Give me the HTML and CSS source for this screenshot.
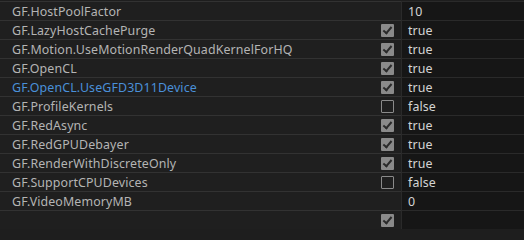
FILE: index.html
```html
<!DOCTYPE html>
<html>
<head>
<meta charset="utf-8">
<link rel="stylesheet" href="styles.css">
</head>
<body>
<div class="list">
  <div class="row"><span class="name">GF.HostPoolFactor</span><span class="chk none"></span><span class="val">10</span></div>
  <div class="row"><span class="name">GF.LazyHostCachePurge</span><span class="chk on"></span><span class="val">true</span></div>
  <div class="row"><span class="name">GF.Motion.UseMotionRenderQuadKernelForHQ</span><span class="chk on"></span><span class="val">true</span></div>
  <div class="row"><span class="name">GF.OpenCL</span><span class="chk on"></span><span class="val">true</span></div>
  <div class="row"><span class="name blue">GF.OpenCL.UseGFD3D11Device</span><span class="chk on"></span><span class="val">true</span></div>
  <div class="row"><span class="name">GF.ProfileKernels</span><span class="chk off"></span><span class="val">false</span></div>
  <div class="row"><span class="name">GF.RedAsync</span><span class="chk on"></span><span class="val">true</span></div>
  <div class="row"><span class="name">GF.RedGPUDebayer</span><span class="chk on"></span><span class="val">true</span></div>
  <div class="row"><span class="name">GF.RenderWithDiscreteOnly</span><span class="chk on"></span><span class="val">true</span></div>
  <div class="row"><span class="name">GF.SupportCPUDevices</span><span class="chk off"></span><span class="val">false</span></div>
  <div class="row"><span class="name">GF.VideoMemoryMB</span><span class="chk none"></span><span class="val">0</span></div>
  <div class="row"><span class="name"></span><span class="chk on"></span><span class="val"></span></div>
</div>
</body>
</html>
```
FILE: styles.css
```css
html, body {
  margin: 0;
  padding: 0;
  background: #1e1e1e;
  overflow: hidden;
}
.list {
  padding-top: 1px;
  font-family: "Noto Sans", "Open Sans", sans-serif;
  font-size: 12.4px;
  letter-spacing: 0.12px;
}
.row {
  display: flex;
  align-items: center;
  height: 18px;
  border-top: 1px solid #323232;
  background: #1f1f1f;
}
.name {
  flex: 1;
  padding-left: 12px;
  color: #b4b4b4;
  white-space: nowrap;
}
.name.blue {
  color: #4a90d9;
}
.chk {
  width: 13px;
  height: 13px;
  box-sizing: border-box;
  margin-right: 7px;
  border-radius: 1px;
  position: relative;
}
.chk.on {
  background: #8a8a8a;
}
.chk.on::after {
  content: "";
  position: absolute;
  left: 4px;
  top: 1px;
  width: 3px;
  height: 7px;
  border: solid #2a2a2a;
  border-width: 0 2px 2px 0;
  transform: rotate(40deg);
}
.chk.off {
  border: 1.5px solid #8a8a8a;
}
.val {
  width: 116px;
  align-self: stretch;
  background: #161616;
  border-left: 1px solid #2a2a2a;
  border-top: 1px solid #2a2a2a;
  margin-top: -1px;
  color: #d4d4d4;
  padding-left: 6px;
  display: flex;
  align-items: center;
}
```
